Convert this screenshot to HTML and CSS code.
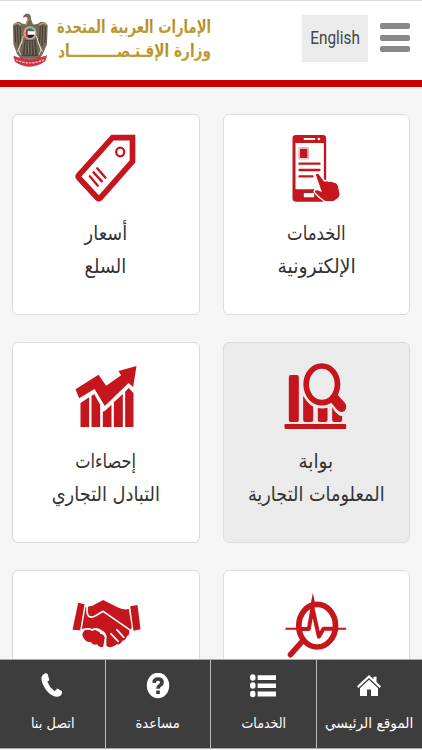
FILE: index.html
```html
<!DOCTYPE html>
<html lang="ar" dir="rtl">
<head>
  <meta charset="UTF-8">
  <meta name="viewport" content="width=device-width, initial-scale=1.0">
  <title>وزارة الإقتصاد</title>
  <link rel="stylesheet" href="styles.css">
</head>
<body>
  <header class="header">
    <button class="menu-btn" aria-label="القائمة"><span></span><span></span><span></span></button>
    <a href="#" class="lang"><span>English</span></a>
    <a href="#" class="logo">
      <svg class="logo-text" width="158" height="60" viewBox="0 0 158 60" direction="rtl">
        <defs>
          <linearGradient id="gold" x1="0" y1="0" x2="0" y2="1">
            <stop offset="0" stop-color="#a98512"/>
            <stop offset="1" stop-color="#c5a344"/>
          </linearGradient>
        </defs>
        <text x="155" y="23" textLength="154" lengthAdjust="spacingAndGlyphs">الإمارات العربية المتحدة</text>
        <text x="155" y="47" textLength="153" lengthAdjust="spacingAndGlyphs">وزارة الإقـتـصــــــــــاد</text>
      </svg>
      <svg class="emblem" width="38" height="56" viewBox="34 36 114 168">
        <path d="M68 48Q74 37 85 42Q92 46 91 58L97 73Q110 75 120 66Q133 63 141 75L139 133L126 163L116 176H61L49 162L38 132L37 76Q45 63 57 66Q67 75 77 71L81 54Q76 48 68 54Z" fill="#756957"/>
        <path d="M43 78L45 128M50 75L53 137M58 78L61 141M134 78L133 128M126 75L124 137M119 78L116 141" stroke="#3e3931" stroke-width="3" fill="none"/>
        <path d="M39 74Q48 65 61 75M138 74Q129 65 116 75M75 76L83 56" stroke="#b59a77" stroke-width="4" fill="none"/>
        <path d="M68 108L54 150L60 164M107 108L121 150L115 164M65 124L50 155M111 124L125 155" stroke="#ded7c8" stroke-width="3" fill="none"/>
        <path d="M72 120H104L111 168H65Z" fill="#4a443c"/>
        <path d="M77 122L74 165M84 122L83 165M91 122L92 165M98 122L102 165" stroke="#817766" stroke-width="3"/>
        <circle cx="88" cy="99" r="20" fill="#c9a79a"/>
        <circle cx="88" cy="99" r="15" fill="#fff"/>
        <path d="M76 90A15 15 0 0 1 100 90L102 94H76Z" fill="#27805b"/>
        <path d="M76 104H102A15 15 0 0 1 76 108Z" fill="#222"/>
        <path d="M81 86V112A15 15 0 0 1 81 86Z" fill="#d32735"/>
        <path d="M38 167Q88 187 139 166L134 184Q88 216 43 185Z" fill="#cf3445"/>
        <path d="M46 180Q88 198 130 179" fill="none" stroke="#f0bfc3" stroke-width="4" stroke-dasharray="7 3"/>
      </svg>
    </a>
  </header>

  <main class="cards">
    <a href="#" class="card">
      <svg class="icon" viewBox="19.5 30 240 240">
        <path fill-rule="evenodd" d="M79 45H160Q170 45 170 55V181L163 178V69H78V208H135L143 218L164 239L162 245H79Q69 245 69 235V55Q69 45 79 45ZM103 54V60H137V54ZM103 219V232H134V219Z"/>
        <circle cx="148" cy="57" r="4" fill="#fff"/>
        <path d="M91 86H114V114H91Z"/>
        <path class="thin" d="M88 83H117V117H88Z"/>
        <path class="line" d="M90 131H150M90 150H150M90 169H129"/>
        <path class="hand" d="M139 164Q144 158 149 165L164 185Q172 182 178 186Q187 183 192 188Q201 188 205 197L210 221Q211 229 205 234L192 243H167L151 231L136 216Q136 209 144 211L157 216Z"/>
      </svg>
      <p><span class="w-services">الخدمات</span><span class="w-electronic">الإلكترونية</span></p>
    </a>
    <a href="#" class="card">
      <svg class="icon" viewBox="16.5 30 240 240">
        <path class="outline" d="M156 53L55 165Q51 170 56 175L111 234Q115 238 119 234L216 124V53Z"/>
        <ellipse class="ring" cx="179" cy="96" rx="12" ry="13"/>
        <path class="line" d="M88 169L112 197M99 157L124 184M110 145L135 173"/>
      </svg>
      <p><span class="w-prices">أسعار</span><span class="w-goods">السلع</span></p>
    </a>
    <a href="#" class="card active">
      <svg class="icon" viewBox="19.5 24 240 240">
        <rect x="58" y="75" width="30" height="141" rx="6"/>
        <path d="M101 137Q112 158 131 170V210Q131 216 125 216H107Q101 216 101 210ZM145 174Q160 177 174 173V210Q174 216 168 216H151Q145 216 145 210ZM188 171Q196 188 211 197L218 198V210Q218 216 212 216H194Q188 216 188 210Z"/>
        <rect x="45" y="222" width="185" height="15" rx="3"/>
        <ellipse class="lens" cx="157" cy="103" rx="47" ry="55"/>
        <path d="M188 147L202 132L226 158Q235 171 225 183Q214 191 203 179L181 154Z"/>
      </svg>
      <p><span class="w-portal">بوابة</span><span class="w-trade-info">المعلومات التجارية</span></p>
    </a>
    <a href="#" class="card">
      <svg class="icon" viewBox="16.5 24 240 240">
        <path d="M45 118L114 74L137 107L182 76L174 63L228 48L218 111L204 99L133 168L102 117L56 145Z"/>
        <path d="M60 159L86 142V231H60ZM93 138L101 132L119 164V231H93ZM127 185L133 183L153 164V231H127ZM160 157L187 132V231H160ZM194 125L205 114L219 130V231H194Z"/>
      </svg>
      <p><span class="w-stats">إحصاءات</span><span class="w-exchange">التبادل التجاري</span></p>
    </a>
    <a href="#" class="card">
      <svg class="icon" viewBox="19.5 18 240 240">
        <path d="M124 70L130 39L137 70ZM48 143H86V149H48ZM200 143H230V149H200Z"/>
        <ellipse class="lens" cx="143" cy="137" rx="55" ry="64"/>
        <path class="pulse" d="M90 147H118L129 84L148 170L162 146H197"/>
        <path class="lens" d="M99 183L63 224"/>
      </svg>
    </a>
    <a href="#" class="card">
      <svg class="icon" viewBox="16.5 18 240 240">
        <path d="M53 68L72 73L59 151L36 149ZM209 79L231 75L240 148L219 152ZM75 82L96 77L128 60L171 82Q188 91 205 87L214 143L206 153Q209 164 199 169Q197 181 186 182Q179 195 169 193Q153 208 137 197L132 158L121 150Q108 147 95 149L82 145L64 147Z"/>
        <path d="M69 155Q74 147 82 149Q89 146 95 153Q103 146 111 154Q117 153 120 162Q131 162 133 174L128 200Q115 205 110 193Q98 198 91 186Q75 188 68 172Q63 163 69 155Z"/>
        <path class="fingers" d="M80 81Q78 101 84 108Q94 115 105 107L128 94L207 149M151 161L173 184M169 149L190 172M135 176V199M66 149Q81 144 95 149Q110 143 122 153Q136 158 136 175"/>
      </svg>
    </a>
  </main>

  <nav class="bottom-nav">
    <a href="#">
      <svg viewBox="0 0 26 28">
        <path d="M13 2L17.5 6.2V3.7H20.5V9L25 13.3L23.6 15L13 5L2.4 15L1 13.3Z"/>
        <path d="M13 6.8L22 15.2V23H15V16.5H11V23H4V15.2Z"/>
      </svg>
      <span class="w-home">الموقع الرئيسي</span>
    </a>
    <a href="#">
      <svg viewBox="0 0 26 28">
        <ellipse cx="2.8" cy="4.5" rx="2.8" ry="3.3"/><ellipse cx="2.8" cy="12.5" rx="2.8" ry="3.3"/><ellipse cx="2.8" cy="21" rx="2.8" ry="3.3"/>
        <path d="M7.6 2.2H26V7H7.6ZM7.6 10.4H26V15H7.6ZM7.6 18.6H26V23.4H7.6Z"/>
      </svg>
      <span class="w-nav-services">الخدمات</span>
    </a>
    <a href="#">
      <svg viewBox="0 0 26 28">
        <ellipse cx="13" cy="12.5" rx="11.2" ry="12.8"/>
        <path class="question" d="M9 9.8Q9.2 6 13 6Q17 6 17 9.3Q17 11.3 14.8 12.5Q13 13.5 13 15.8M13 17.4V21"/>
      </svg>
      <span class="w-help">مساعدة</span>
    </a>
    <a href="#">
      <svg viewBox="0 0 26 28">
        <path d="M5.8 .5Q3.2 1.5 2.5 4.2Q2 7 4.2 12Q8 20 14.3 23Q18.5 24.4 21.4 22.7Q23.4 21 23 18.3L18.3 15.6L15.6 18.3Q10.7 14.7 8.3 8.8L10.3 7.2L8.8 1.2Q7.5 0 5.8 .5Z"/>
      </svg>
      <span class="w-call">اتصل بنا</span>
    </a>
  </nav>
</body>
</html>
```

FILE: styles.css
```css
* {
  box-sizing: border-box;
}
body {
  display: flex;
  flex-direction: column;
  margin: 0;
  height: 100vh;
  padding-bottom: 1px;
  overflow: hidden;
  background-color: #f5f5f5;
  color: #333;
  font-family: 'DejaVu Sans', sans-serif;
}
a {
  color: inherit;
  text-decoration: none;
}
.header {
  display: flex;
  flex: none;
  align-items: flex-start;
  height: 87px;
  padding: 14px 12px 0;
  background-color: #fff;
  border-top: 1px solid #dcdcdc;
  border-bottom: 7px solid #c00;
}
.menu-btn {
  display: flex;
  flex-direction: column;
  gap: 5.5px;
  width: 30px;
  margin: 8px 0 0;
  padding: 0;
  border: 0;
  background: none;
}
.menu-btn span {
  height: 6px;
  border-radius: 2px;
  background-color: #888;
}
.lang {
  display: flex;
  justify-content: center;
  width: 66px;
  height: 47px;
  margin-right: 12px;
  background-color: #ebebeb;
  color: #444;
  font: 18px/45px Roboto, sans-serif;
}
.lang span {
  transform: scaleX(0.85);
}
.logo {
  display: flex;
  margin-right: auto;
}
.logo-text {
  margin-left: 6px;
  margin-top: -5px;
  overflow: visible;
  fill: url(#gold);
  font-size: 18px;
  font-weight: bold;
}
.emblem {
  margin-top: -3px;
}
.cards {
  display: grid;
  flex: 1;
  min-height: 0;
  overflow: hidden;
  grid-template-columns: 1fr 1fr;
  grid-auto-rows: 201px;
  gap: 27px 23px;
  padding: 27px 12px 0;
}
.card {
  display: flex;
  flex-direction: column;
  align-items: center;
  padding-top: 15px;
  background-color: #fff;
  border: 1px solid #dcdcdc;
  border-radius: 6px;
}
.card.active {
  background-color: #ebebeb;
}
.icon {
  width: 80px;
  height: 80px;
  flex: none;
  fill: #c4161c;
}
.line, .thin, .outline, .ring, .pulse, .lens {
  fill: none;
  stroke: #c4161c;
}
.line {
  stroke-width: 7;
  stroke-linecap: round;
}
.thin {
  stroke-width: 1;
}
.outline {
  stroke-width: 17;
}
.ring {
  stroke-width: 7;
}
.pulse {
  stroke-width: 12;
  stroke-linejoin: round;
}
.lens {
  stroke-width: 17;
  stroke-linecap: round;
}
.hand {
  stroke: #fff;
  stroke-width: 8;
  paint-order: stroke;
}
.fingers {
  fill: none;
  stroke: #fff;
  stroke-width: 5;
  stroke-linejoin: round;
  stroke-linecap: round;
}
.card p {
  display: flex;
  flex-direction: column;
  align-items: center;
  margin: 7px 0 0;
  font-size: 20px;
  line-height: 33px;
  white-space: nowrap;
}

/* condensed labels */
.w-services { transform: scaleX(0.83); }
.w-electronic { transform: scaleX(0.94); }
.w-prices { transform: scaleX(0.89); }
.w-goods { transform: scaleX(0.89); }
.w-portal { transform: scaleX(0.92); }
.w-trade-info { transform: scaleX(0.885); }
.w-stats { transform: scaleX(0.81); }
.w-exchange { transform: scaleX(0.89); }
.w-home { transform: scaleX(0.98); }
.w-nav-services { transform: scaleX(0.9); }
.w-help { transform: scaleX(0.94); }
.w-call { transform: scaleX(0.92); }

/* bottom bar */
.bottom-nav {
  display: grid;
  flex: none;
  grid-template-columns: repeat(4, 1fr);
  height: 90px;
  background-color: #3d3d3d;
  border-top: 1px solid #aaa;
  border-bottom: 1px solid #aaa;
}
.bottom-nav a {
  display: flex;
  flex-direction: column;
  align-items: center;
  padding-top: 13px;
  color: #fff;
  font-size: 14px;
  line-height: 20px;
  white-space: nowrap;
}
.bottom-nav a + a {
  border-right: 1px solid #bbb;
}
.bottom-nav svg {
  width: 26px;
  height: 28px;
  margin-bottom: 12px;
  fill: #fff;
}
.question {
  fill: none;
  stroke: #3d3d3d;
  stroke-width: 3.6;
}
```
